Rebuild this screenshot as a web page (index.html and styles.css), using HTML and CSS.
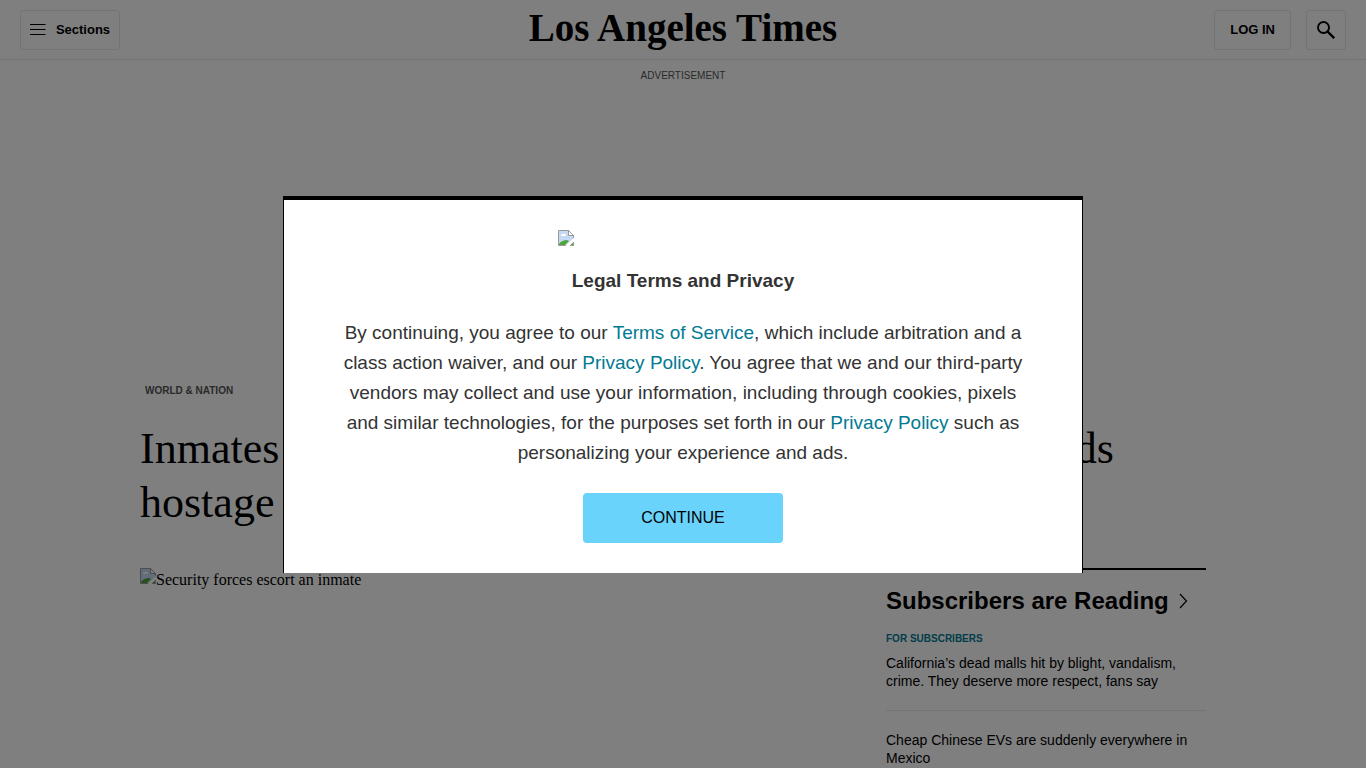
FILE: index.html
```html
<!DOCTYPE html>
<html lang="en">
<head>
  <meta charset="UTF-8" />
  <meta name="viewport" content="width=device-width, initial-scale=1.0"/>
  <title>Los Angeles Times</title>
  <link rel="stylesheet" href="styles.css">
</head>
<body>
  <header class="site-header">
    <div class="header-left">
      <button type="button" class="header-btn sections-btn">
        <svg width="16" height="12" viewBox="0 0 16 12" aria-hidden="true">
          <path d="M0 .5h15.500M0 5.500h15.500M0 10.500h15.500" fill="none" stroke="#000" stroke-width="1.200"/>
        </svg>
        Sections
      </button>
    </div>
    <a class="logo" href="#">Los Angeles Times</a>
    <div class="header-right">
      <button type="button" class="header-btn login-btn">LOG IN</button>
      <button type="button" class="header-btn search-btn" aria-label="Search">
        <svg width="18" height="18" viewBox="0 0 18 18" aria-hidden="true">
          <circle cx="6.500" cy="6.500" r="5.500" fill="none" stroke="#000" stroke-width="1.900"/>
          <path d="M10.400 10.400L17.200 17.200" fill="none" stroke="#000" stroke-width="2.400"/>
        </svg>
      </button>
    </div>
  </header>

  <div class="ad-slot">Advertisement</div>

  <div class="page">
    <a class="category" href="#">World &amp; Nation</a>
    <h1>Inmates at one prison in Ecuador take dozens of guards hostage</h1>

    <div class="columns">
      <main class="story">
        <div class="lead-image">
          <svg width="16" height="16" viewBox="0 0 16 16" aria-hidden="true">
            <path d="M.5 15.500V.5h10l5 5v3" fill="#c5d9f5" stroke="#9a9a9a"/>
            <path d="M1 1h9.500l4.500 5v3l-7 6H1z" fill="#c5d9f5"/>
            <path d="M10.500.5v5h5z" fill="#fff" stroke="#9a9a9a"/>
            <path d="M3 6a2 1.500 0 0 1 2-2a2 2 0 0 1 3 2z" fill="#fff"/>
            <path d="M1 15v-1c2-3 5-4 8-4l2 1l-4 4z" fill="#4ea53c"/>
            <path d="M8 16l8-8v3l-5 5z" fill="#fff"/>
            <path d="M12 15.500h3.500V12z" fill="#4ea53c"/>
            <path d="M.5 15.500H8M12 15.500h3.500V12" fill="none" stroke="#9a9a9a"/>
          </svg>
          <span>Security forces escort an inmate</span>
        </div>
      </main>

      <aside class="sidebar">
        <h2>
          <a href="#">Subscribers are Reading
            <svg width="9" height="16" viewBox="0 0 9 16" aria-hidden="true">
              <path d="M1 1l6.500 7L1 15" fill="none" stroke="#000" stroke-width="1.200"/>
            </svg>
          </a>
        </h2>
        <ul>
          <li>
            <span class="label">For Subscribers</span>
            <a href="#">California’s dead malls hit by blight, vandalism, crime. They deserve more respect, fans say</a>
          </li>
          <li>
            <a href="#">Cheap Chinese EVs are suddenly everywhere in Mexico</a>
          </li>
        </ul>
      </aside>
    </div>
  </div>

  <div class="overlay">
    <div class="modal" role="dialog" aria-modal="true" aria-labelledby="modalTitle">
      <div class="modal-logo">
        <svg width="16" height="16" viewBox="0 0 16 16" aria-hidden="true">
          <path d="M.5 15.500V.5h10l5 5v3" fill="#c5d9f5" stroke="#9a9a9a"/>
          <path d="M1 1h9.500l4.500 5v3l-7 6H1z" fill="#c5d9f5"/>
          <path d="M10.500.5v5h5z" fill="#fff" stroke="#9a9a9a"/>
          <path d="M3 6a2 1.500 0 0 1 2-2a2 2 0 0 1 3 2z" fill="#fff"/>
          <path d="M1 15v-1c2-3 5-4 8-4l2 1l-4 4z" fill="#4ea53c"/>
          <path d="M8 16l8-8v3l-5 5z" fill="#fff"/>
          <path d="M12 15.500h3.500V12z" fill="#4ea53c"/>
          <path d="M.5 15.500H8M12 15.500h3.500V12" fill="none" stroke="#9a9a9a"/>
        </svg>
      </div>
      <h3 id="modalTitle">Legal Terms and Privacy</h3>
      <p>By continuing, you agree to our <a href="#">Terms of Service</a>, which include arbitration and a class action waiver, and our <a href="#">Privacy Policy</a>. You agree that we and our third-party vendors may collect and use your information, including through cookies, pixels and similar technologies, for the purposes set forth in our <a href="#">Privacy Policy</a> such as personalizing your experience and ads.</p>
      <button type="button" class="continue-btn">CONTINUE</button>
    </div>
  </div>
</body>
</html>
```

FILE: styles.css
```css
* {
  box-sizing: border-box;
}

body {
  margin: 0;
  height: 100vh;
  overflow: hidden;
  background: #fff;
  color: #000;
  font-family: "Liberation Sans", Arial, sans-serif;
}

a {
  color: inherit;
  text-decoration: none;
}

button {
  font-family: inherit;
  cursor: pointer;
}

/* header */
.site-header {
  display: grid;
  grid-template-columns: 1fr auto 1fr;
  align-items: center;
  height: 60px;
  padding: 0 20px;
  border-bottom: 1px solid #e6e6e6;
}

.header-right {
  display: flex;
  justify-content: flex-end;
  gap: 15px;
}

.header-btn {
  display: flex;
  align-items: center;
  justify-content: center;
  height: 40px;
  border: 1px solid #e6e6e6;
  border-radius: 3px;
  background: none;
  color: #000;
  font-size: 13px;
  font-weight: bold;
}

.sections-btn {
  gap: 10px;
  width: 100px;
  padding: 0;
}

.login-btn {
  padding: 0 15px;
}

.search-btn {
  width: 40px;
  padding: 0;
}

.logo {
  padding-bottom: 4px;
  font-family: "Liberation Serif", "Times New Roman", serif;
  font-size: 39px;
  font-weight: bold;
  line-height: 40px;
}

.ad-slot {
  height: 312px;
  padding-top: 10px;
  color: #555;
  font-size: 10px;
  line-height: 12px;
  text-align: center;
  text-transform: uppercase;
}

/* article */
.page {
  max-width: 1086px;
  margin: 0 auto;
  padding-top: 12px;
}

.category {
  display: block;
  padding-left: 5px;
  color: #555;
  font-size: 10px;
  font-weight: bold;
  line-height: 14px;
  text-transform: uppercase;
}

h1 {
  margin: 24px 0 38px;
  padding-right: 20px;
  font-family: "Liberation Serif", "Times New Roman", serif;
  font-size: 44px;
  font-weight: normal;
  line-height: 54px;
}

.columns {
  display: flex;
  gap: 20px;
  padding-right: 20px;
}

.story {
  flex: 1;
}

.lead-image {
  display: flex;
  font-family: "Liberation Serif", "Times New Roman", serif;
  font-size: 16px;
  line-height: 24px;
}

.sidebar {
  width: 320px;
  border-top: 2px solid #000;
}

.sidebar h2 {
  margin: 16px 0 17px;
  font-size: 24px;
  line-height: 30px;
}

.sidebar h2 a {
  display: flex;
  align-items: center;
  gap: 10px;
}

.sidebar ul {
  margin: 0;
  padding: 0;
  list-style: none;
}

.sidebar li {
  padding-bottom: 20px;
  margin-bottom: 20px;
  border-bottom: 1px solid #e6e6e6;
  font-size: 14px;
  line-height: 18px;
}

.label {
  display: block;
  margin-bottom: 9px;
  color: #027a94;
  font-size: 10px;
  font-weight: bold;
  line-height: 12px;
  text-transform: uppercase;
}

/* consent modal */
.overlay {
  position: fixed;
  inset: 0;
  display: flex;
  align-items: center;
  justify-content: center;
  background: rgba(0, 0, 0, 0.5);
}

.modal {
  width: 800px;
  max-width: 100%;
  padding: 30px 50px;
  border: 1px solid #000;
  border-top-width: 4px;
  border-bottom: 0;
  background: #fff;
  color: #333;
  font-size: 19px;
  line-height: 30px;
  text-align: center;
}

.modal-logo {
  display: flex;
  width: 250px;
  margin: 0 auto 20px;
}

.modal h3 {
  margin: 0 0 22px;
  font-size: 19px;
}

.modal p {
  margin: 0 0 25px;
}

.modal p a {
  color: #027a94;
}

.continue-btn {
  display: block;
  width: 200px;
  height: 50px;
  margin: 0 auto;
  border: 0;
  border-radius: 4px;
  background: #69d3fb;
  color: #000;
  font-size: 16px;
}
```
